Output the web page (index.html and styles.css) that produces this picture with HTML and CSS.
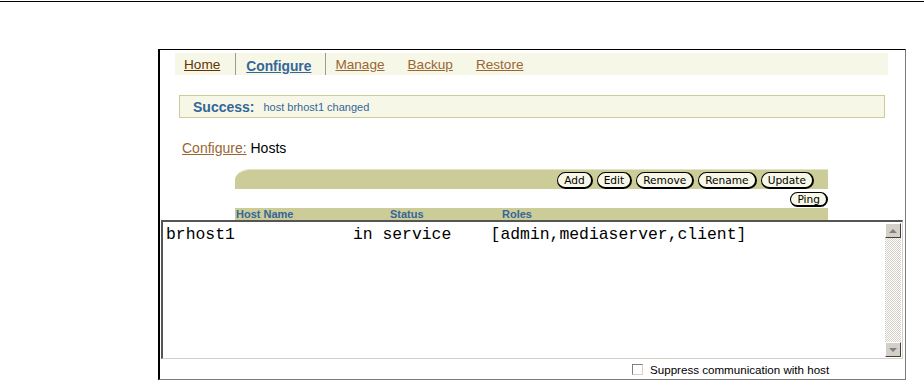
FILE: index.html
```html
<html>

<head>
  <link rel="stylesheet" href="styles.css">
</head>

<body>
  <div class="topline"></div>
  <div class="frame">
    <div class="tabbar">
      <a class="tab tab-home" href="#">Home</a>
      <a class="tab tab-active" href="#">Configure</a>
      <a class="tab" href="#">Manage</a>
      <a class="tab" href="#">Backup</a>
      <a class="tab" href="#">Restore</a>
    </div>

    <div class="message">
      <span class="message-title">Success:</span>
      <span class="message-text">host brhost1 changed</span>
    </div>

    <div class="crumbs">
      <a href="#">Configure:</a> Hosts
    </div>

    <div class="table">
      <div class="toolbar">
        <button class="btn">Add</button>
        <button class="btn">Edit</button>
        <button class="btn">Remove</button>
        <button class="btn">Rename</button>
        <button class="btn">Update</button>
      </div>
      <div class="toolbar-extra">
        <button class="btn">Ping</button>
      </div>
      <div class="columns">
        <span class="col-name">Host Name</span>
        <span class="col-status">Status</span>
        <span class="col-roles">Roles</span>
      </div>
    </div>

    <div class="listbox">
      <pre class="listbox-text">brhost1            in service    [admin,mediaserver,client]</pre>
      <div class="scrollbar">
        <div class="scroll-btn"><span class="arrow-up"></span></div>
        <div class="scroll-track"></div>
        <div class="scroll-btn"><span class="arrow-down"></span></div>
      </div>
    </div>

    <label class="suppress">
      <span class="checkbox"></span>
      Suppress communication with host
    </label>
  </div>
</body>

</html>
```

FILE: styles.css
```css
* {
  box-sizing: border-box;
}

body {
  margin: 0;
  font-family: "Liberation Sans", Arial, sans-serif;
  background: #fff;
  color: #000;
}

.topline {
  margin-top: 1px;
  border-top: 1px solid #000;
}

.frame {
  margin: 47px 0 0 158px;
  width: 748px;
  height: 331px;
  border-top: 1px solid #000;
  border-left: 2px solid #000;
  border-right: 1px solid #7a7a7a;
  border-bottom: 1px solid #7a7a7a;
  display: flex;
  flex-direction: column;
}

/* tabs */
.tabbar {
  margin: 3px 0 0 15px;
  width: 713px;
  height: 22px;
  background: #f7f7e7;
  display: flex;
  align-items: stretch;
}

.tab {
  display: flex;
  align-items: center;
  padding: 1px 23px 0 0;
  font-size: 13.6px;
  color: #996633;
  text-decoration: underline;
}

.tab-home {
  padding-left: 9px;
  padding-right: 15px;
  color: #663300;
  border-right: 1px solid #999;
}

.tab-active {
  padding: 4px 14px 0 10px;
  font-size: 13.8px;
  font-weight: bold;
  color: #336699;
  border-right: 1px solid #999;
  margin-right: 9px;
}

/* message */
.message {
  margin: 20px 0 0 19px;
  width: 706px;
  height: 23px;
  background: #f7f7e7;
  border: 1px solid #cccc99;
  display: flex;
  align-items: center;
  padding-left: 13px;
  color: #336699;
}

.message-title {
  font-size: 14px;
  font-weight: bold;
  margin-right: 9px;
}

.message-text {
  font-size: 11px;
}

/* breadcrumbs */
.crumbs {
  margin: 22px 0 0 22px;
  height: 17px;
  line-height: 17px;
  font-size: 14px;
}

.crumbs a {
  color: #996633;
}

/* table header */
.table {
  margin: 12px 0 0 75px;
  width: 593px;
}

.toolbar {
  height: 20px;
  background: #cccc99;
  border-top-left-radius: 16px 11px;
  border-top: 1px solid #e4e4c8;
  display: flex;
  justify-content: flex-end;
  align-items: flex-end;
  gap: 4px;
  padding-right: 14px;
}

.btn {
  height: 17px;
  padding: 0 6px;
  font-family: "DejaVu Sans", sans-serif;
  font-size: 10.6px;
  color: #000;
  background: #f7f7e7;
  border: 1px solid #000;
  border-right-width: 2px;
  border-bottom-width: 2px;
  border-radius: 9px;
  line-height: 13px;
}

.toolbar-extra {
  height: 19px;
  display: flex;
  justify-content: flex-end;
  padding-top: 3px;
}

.toolbar-extra .btn {
  height: 15px;
  line-height: 11px;
}

.columns {
  height: 12px;
  background: #cccc99;
  display: flex;
  font-size: 11px;
  font-weight: bold;
  line-height: 12px;
  color: #336699;
}

.col-name {
  margin-left: 1px;
  width: 154px;
}

.col-status {
  width: 112px;
}

/* list box */
.listbox {
  margin-left: 1px;
  width: 742px;
  height: 139px;
  border-top: 2px solid #555;
  border-left: 2px solid #555;
  border-right: 1px solid #d4d0c8;
  border-bottom: 1px solid #d4d0c8;
  display: flex;
}

.listbox-text {
  flex: 1;
  margin: 0;
  padding: 4px 0 0 3px;
  font-family: "Liberation Mono", "Courier New", monospace;
  font-size: 16.4px;
  line-height: 18px;
}

.scrollbar {
  width: 16px;
  margin: 1px 1px 1px 0;
  display: flex;
  flex-direction: column;
}

.scroll-btn {
  height: 15px;
  background: #d4d0c8;
  border-top: 1px solid #fff;
  border-left: 1px solid #fff;
  border-right: 1px solid #404040;
  border-bottom: 1px solid #404040;
  display: flex;
  align-items: center;
  justify-content: center;
}

.scroll-track {
  flex: 1;
  background: repeating-conic-gradient(#d4d0c8 0 25%, #fff 0 50%) 0 0 / 2px 2px;
}

.arrow-up,
.arrow-down {
  width: 0;
  height: 0;
  border-left: 4px solid transparent;
  border-right: 4px solid transparent;
}

.arrow-up {
  border-bottom: 4px solid #808080;
}

.arrow-down {
  border-top: 4px solid #808080;
}

/* footer */
.suppress {
  flex: 1;
  display: flex;
  align-items: center;
  padding-left: 472px;
  font-size: 11.6px;
}

.checkbox {
  width: 11px;
  height: 11px;
  margin-right: 7px;
  background: #fff;
  border-top: 1px solid #808080;
  border-left: 1px solid #808080;
  border-right: 1px solid #d4d0c8;
  border-bottom: 1px solid #d4d0c8;
}
```
